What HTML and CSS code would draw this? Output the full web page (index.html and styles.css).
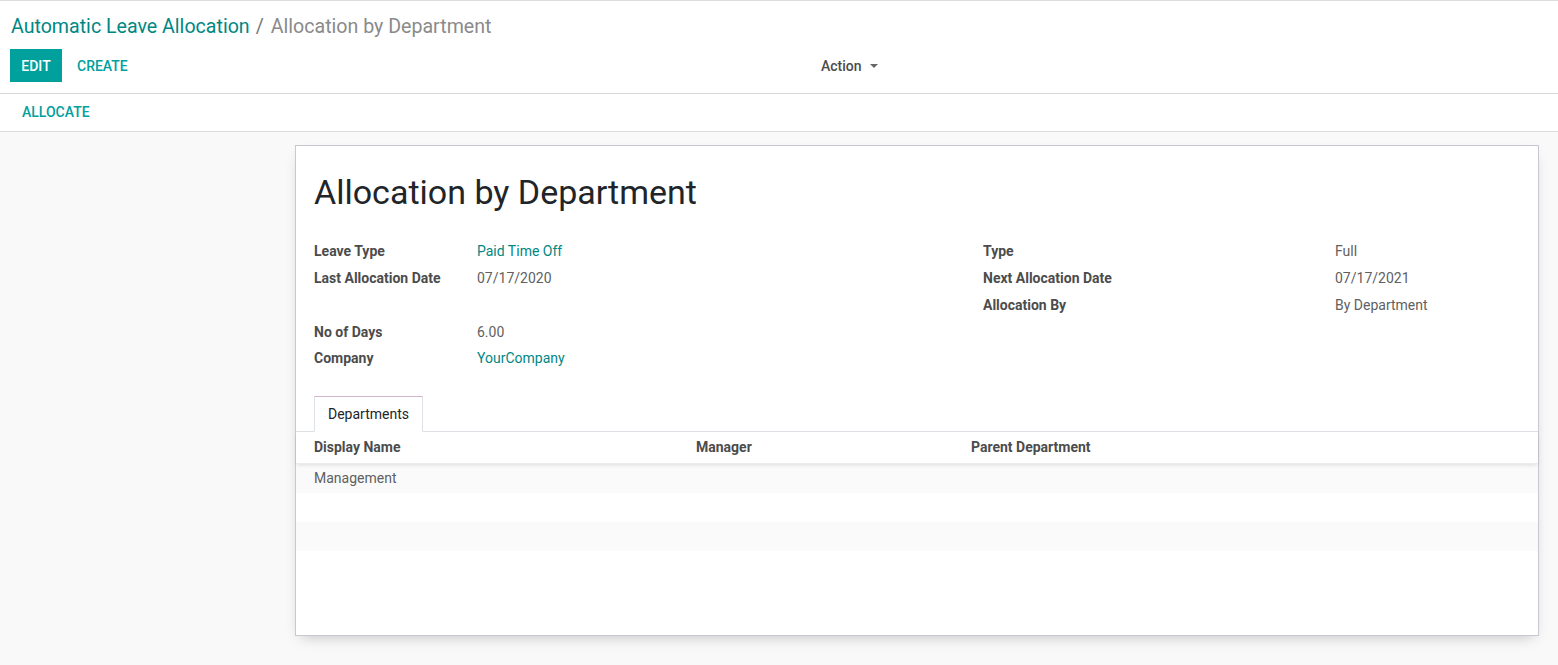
FILE: index.html
```html
<!DOCTYPE html>
<html>
<head>
<meta charset="utf-8">
<link rel="stylesheet" href="styles.css">
</head>
<body>
<div class="control-panel">
  <div class="breadcrumb">
    <a class="crumb-link">Automatic Leave Allocation</a>
    <span class="crumb-sep">/</span>
    <span class="crumb-active">Allocation by Department</span>
  </div>
  <div class="cp-bottom">
    <div class="cp-buttons">
      <button class="btn btn-primary">EDIT</button>
      <button class="btn btn-link">CREATE</button>
    </div>
    <div class="cp-sidebar">
      <span class="dropdown">Action <span class="caret"></span></span>
    </div>
  </div>
</div>
<div class="statusbar">
  <button class="btn btn-link">ALLOCATE</button>
</div>
<div class="form-bg">
  <div class="sheet">
    <h1 class="title">Allocation by Department</h1>
    <div class="groups">
      <div class="group group-left">
        <div class="label">Leave Type</div><div class="value link">Paid Time Off</div>
        <div class="label">Last Allocation Date</div><div class="value">07/17/2020</div>
        <div class="label empty"></div><div class="value empty"></div>
        <div class="label">No of Days</div><div class="value">6.00</div>
        <div class="label">Company</div><div class="value link">YourCompany</div>
      </div>
      <div class="group group-right">
        <div class="label">Type</div><div class="value">Full</div>
        <div class="label">Next Allocation Date</div><div class="value">07/17/2021</div>
        <div class="label">Allocation By</div><div class="value">By Department</div>
      </div>
    </div>
    <div class="notebook">
      <div class="tabs">
        <div class="tab active">Departments</div>
      </div>
      <div class="list">
        <div class="list-row list-head">
          <div class="col col-name">Display Name</div>
          <div class="col col-manager">Manager</div>
          <div class="col col-parent">Parent Department</div>
        </div>
        <div class="list-row odd">
          <div class="col col-name">Management</div>
          <div class="col col-manager"></div>
          <div class="col col-parent"></div>
        </div>
        <div class="list-row even"></div>
        <div class="list-row odd"></div>
      </div>
    </div>
  </div>
</div>
</body>
</html>
```

FILE: styles.css
```css
* { box-sizing: border-box; }
html, body {
  margin: 0;
  padding: 0;
  height: 100%;
}
body {
  font-family: Roboto, "Noto Sans", sans-serif;
  font-size: 14px;
  color: #4c4c4c;
  background: #f9f9f9;
  border-top: 1px solid #dcdcdc;
}
.control-panel {
  background: #fff;
  border-bottom: 1px solid #d9d9d9;
  padding: 12px 10px 10px 11px;
  height: 93px;
}
.breadcrumb {
  font-size: 19.6px;
  line-height: 28px;
  display: flex;
  align-items: center;
}
.crumb-link { color: #008784; }
.crumb-sep { color: #777; margin: 0 7px 0 6px; }
.crumb-active { color: #8a8a8a; }
.cp-bottom {
  display: flex;
  align-items: center;
  margin-top: 8px;
  margin-left: -1px;
}
.cp-buttons {
  display: flex;
  align-items: center;
  width: 811px;
}
.btn {
  font-family: Roboto, "Noto Sans", sans-serif;
  font-size: 14px;
  font-weight: 500;
  border: 0;
  background: none;
  cursor: pointer;
  text-transform: uppercase;
  height: 33px;
  padding: 0 11px;
  line-height: 35px;
}
.btn-primary {
  background: #00a09d;
  color: #fff;
  width: 52px;
  padding: 0;
}
.btn-link {
  color: #00a09d;
  margin-left: 4px;
}
.cp-sidebar { display: flex; align-items: center; }
.dropdown {
  color: #4c4c4c;
  font-size: 14px;
  font-weight: 500;
  display: inline-flex;
  align-items: center;
}
.caret {
  display: inline-block;
  width: 0; height: 0;
  border-left: 4px solid transparent;
  border-right: 4px solid transparent;
  border-top: 4px solid #666;
  margin-left: 8px;
}
.statusbar {
  background: #fff;
  border-bottom: 1px solid #dedede;
  height: 38px;
  display: flex;
  align-items: center;
  padding-left: 7px;
}
.statusbar .btn { height: 30px; line-height: 30px; margin-left: 4px; padding: 0 11px; margin-top: -2px; }
.form-bg {
  padding: 13px 19px 30px 295px;
}
.sheet {
  background: #fff;
  border: 1px solid #c8c8d0;
  box-shadow: 0 6px 14px -6px rgba(0,0,0,0.25);
  min-height: 491px;
  padding: 24px 0 0 0;
}
.title {
  font-size: 34px;
  font-weight: 400;
  color: #212529;
  margin: 0 0 0 18px;
  line-height: 44px;
}
.groups {
  display: flex;
  margin: 24px 18px 0 18px;
}
.group {
  display: grid;
  grid-auto-rows: 26.75px;
  align-items: center;
}
.group-left {
  grid-template-columns: 163px 506px;
}
.group-right {
  grid-template-columns: 352px 180px;
}
.label {
  font-weight: 700;
  color: #4c4c4c;
}
.value { color: #5f5f5f; }
.value.link { color: #008784; }
.notebook { margin-top: 24px; }
.tabs {
  display: flex;
  padding-left: 18px;
  border-bottom: 1px solid #dee2e6;
}
.tab {
  height: 36px;
  line-height: 34px;
  padding: 0 13px;
  color: #212529;
  font-size: 14px;
  margin-bottom: -1px;
}
.tab.active {
  background: #fff;
  border: 1px solid #dee2e6;
  border-top-color: #d0b6cc;
  border-bottom-color: #fff;
}
.list-row {
  display: flex;
  height: 29px;
  align-items: center;
  padding-left: 18px;
}
.list-head {
  height: 32px;
  font-weight: 700;
  color: #4c4c4c;
  box-shadow: 0 2px 4px -1px rgba(0,0,0,0.12);
  position: relative;
  border-bottom: 1px solid #ebebeb;
}
.list-row.odd { background: #fafafa; color: #5f5f5f; }
.list-row.even { background: #fff; }
.col-name { width: 382px; }
.col-manager { width: 275px; }
.col-parent { flex: 1; }
```
